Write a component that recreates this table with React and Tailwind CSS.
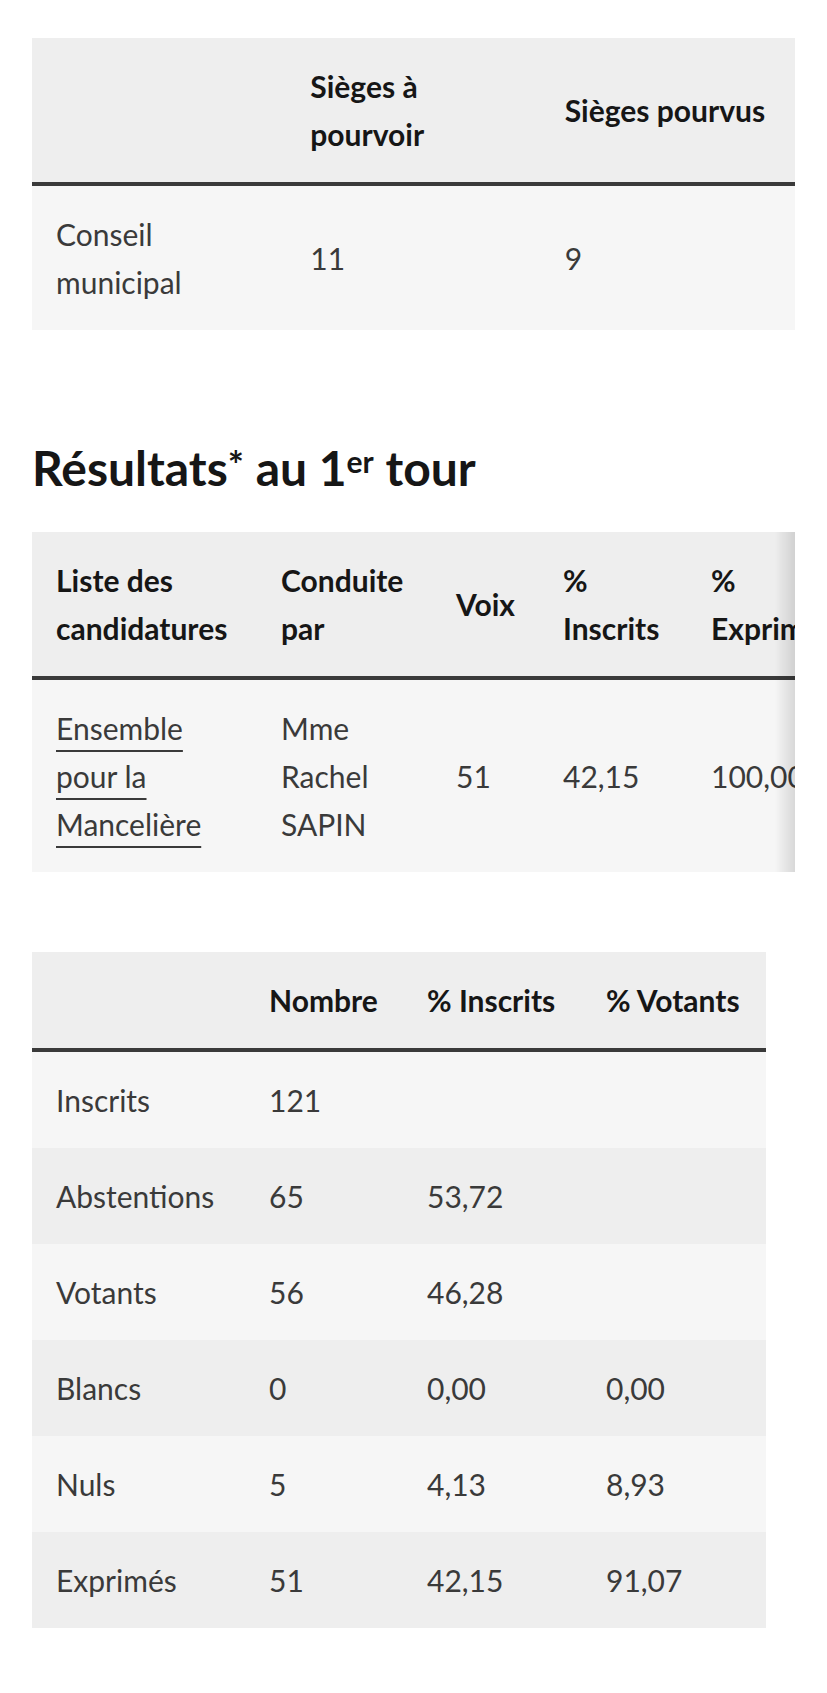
import React from "react";

const th = "px-6 py-6 text-left align-middle font-bold text-[#161616]";
const td = "px-6 py-6 text-left align-middle text-[#3a3a3a]";

export default function App() {
  return (
    <div
      className="bg-white min-h-[1693px] px-8 pt-[38px] text-[30px] leading-[48px]"
      style={{ fontFamily: "Lato, 'Noto Sans', sans-serif" }}
    >
      {/* Table 1 */}
      <table className="w-full table-fixed mb-[106px]">
        <thead>
          <tr className="bg-[#eeeeee] border-b-4 border-[#3a3a3a]">
            <th className={th}></th>
            <th className={th}>
              Sièges à
              <br />
              pourvoir
            </th>
            <th className={th}>Sièges pourvus</th>
          </tr>
        </thead>
        <tbody>
          <tr className="bg-[#f6f6f6]">
            <td className={td}>
              Conseil
              <br />
              municipal
            </td>
            <td className={td}>11</td>
            <td className={td}>9</td>
          </tr>
        </tbody>
      </table>

      {/* Heading */}
      <h3 className="mb-[32px] text-[48px] leading-[64px] font-bold text-[#161616]">
        Résultats
        <sup className="text-[38px] relative -top-[7px]">*</sup> au 1
        <sup className="text-[30px] relative -top-[13px]">er</sup> tour
      </h3>

      {/* Table 2 */}
      <div className="relative mb-[80px]">
        <div className="overflow-x-auto [scrollbar-width:none]">
          <table className="table-fixed w-[835px]">
            <colgroup>
              <col className="w-[225px]" />
              <col className="w-[175px]" />
              <col className="w-[107px]" />
              <col className="w-[148px]" />
              <col className="w-[180px]" />
            </colgroup>
            <thead>
              <tr className="bg-[#eeeeee] border-b-4 border-[#3a3a3a]">
                <th className={th}>
                  Liste des
                  <br />
                  candidatures
                </th>
                <th className={th}>
                  Conduite
                  <br />
                  par
                </th>
                <th className={th}>Voix</th>
                <th className={th}>
                  %
                  <br />
                  Inscrits
                </th>
                <th className={th}>
                  %
                  <br />
                  Exprimés
                </th>
              </tr>
            </thead>
            <tbody>
              <tr className="bg-[#f6f6f6]">
                <td className={td}>
                  <a
                    href="#"
                    className="text-[#3a3a3a] underline decoration-2 underline-offset-[10px]"
                  >
                    Ensemble
                    <br />
                    pour la
                    <br />
                    Mancelière
                  </a>
                </td>
                <td className={td}>
                  Mme
                  <br />
                  Rachel
                  <br />
                  SAPIN
                </td>
                <td className={td}>51</td>
                <td className={td}>42,15</td>
                <td className={td}>100,00</td>
              </tr>
            </tbody>
          </table>
        </div>
        <div className="pointer-events-none absolute right-0 top-0 bottom-0 w-[20px] bg-gradient-to-l from-[rgba(0,0,0,0.12)] to-transparent" />
      </div>

      {/* Table 3 */}
      <table className="table-fixed w-[734px]">
        <colgroup>
          <col className="w-[213px]" />
          <col className="w-[158px]" />
          <col className="w-[179px]" />
          <col className="w-[184px]" />
        </colgroup>
        <thead>
          <tr className="bg-[#eeeeee] border-b-4 border-[#3a3a3a]">
            <th className={th}></th>
            <th className={th}>Nombre</th>
            <th className={th}>% Inscrits</th>
            <th className={th}>% Votants</th>
          </tr>
        </thead>
        <tbody>
          {[
            ["Inscrits", "121", "", "", "bg-[#f6f6f6]"],
            ["Abstentions", "65", "53,72", "", "bg-[#eeeeee]"],
            ["Votants", "56", "46,28", "", "bg-[#f6f6f6]"],
            ["Blancs", "0", "0,00", "0,00", "bg-[#eeeeee]"],
            ["Nuls", "5", "4,13", "8,93", "bg-[#f6f6f6]"],
            ["Exprimés", "51", "42,15", "91,07", "bg-[#eeeeee]"],
          ].map((r) => (
            <tr key={r[0]} className={r[4]}>
              <td className={td}>{r[0]}</td>
              <td className={td}>{r[1]}</td>
              <td className={td}>{r[2]}</td>
              <td className={td}>{r[3]}</td>
            </tr>
          ))}
        </tbody>
      </table>
    </div>
  );
}
